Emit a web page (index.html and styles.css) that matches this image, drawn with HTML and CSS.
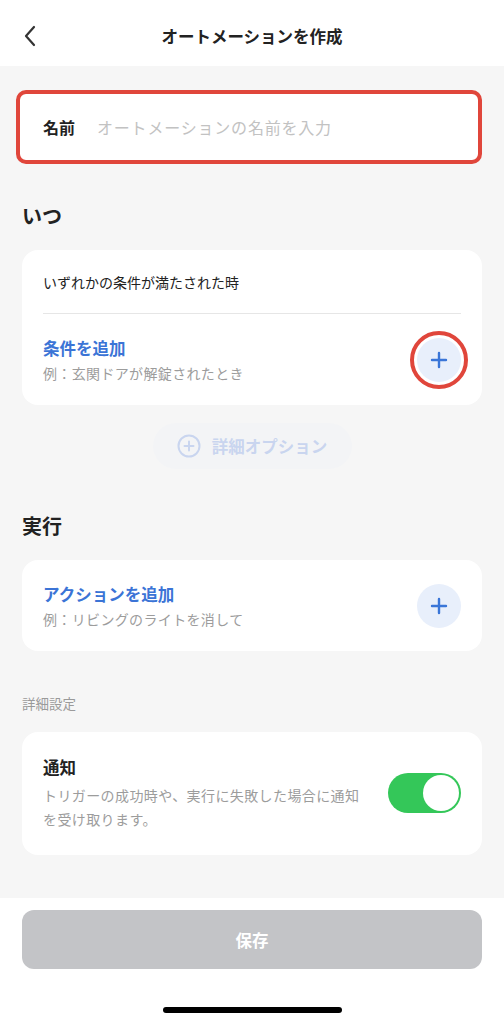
FILE: index.html
```html
<!DOCTYPE html>
<html lang="ja">
<head>
<meta charset="utf-8">
<title>オートメーションを作成</title>
<link rel="stylesheet" href="styles.css">
</head>
<body>
<div class="screen">
  <header class="topbar">
    <span class="back">
      <svg width="14" height="22" viewBox="0 0 14 22"><path d="M11 2 L3 11 L11 20" fill="none" stroke="#333" stroke-width="2.2" stroke-linecap="round" stroke-linejoin="round"/></svg>
    </span>
    <h1 class="title">オートメーションを作成</h1>
  </header>

  <main class="content">
    <div class="name-field">
      <span class="name-label">名前</span>
      <span class="name-placeholder">オートメーションの名前を入力</span>
    </div>

    <h2 class="section-title">いつ</h2>
    <section class="card">
      <div class="card-top">いずれかの条件が満たされた時</div>
      <div class="divider"></div>
      <div class="add-row">
        <div class="add-text">
          <div class="add-title">条件を追加</div>
          <div class="add-sub">例：玄関ドアが解錠されたとき</div>
        </div>
        <span class="plus-btn highlighted">
          <svg width="18" height="18" viewBox="0 0 18 18"><path d="M9 2 V16 M2 9 H16" stroke="#3a76d8" stroke-width="2.4" stroke-linecap="round"/></svg>
        </span>
      </div>
    </section>

    <div class="options-wrap">
      <span class="options-btn">
        <svg width="24" height="24" viewBox="0 0 24 24"><circle cx="12" cy="12" r="10.5" fill="none" stroke="#c9d5ef" stroke-width="2"/><path d="M12 7.5 V16.5 M7.5 12 H16.5" stroke="#c9d5ef" stroke-width="2" stroke-linecap="round"/></svg>
        <span>詳細オプション</span>
      </span>
    </div>

    <h2 class="section-title exec">実行</h2>
    <section class="card">
      <div class="add-row">
        <div class="add-text">
          <div class="add-title">アクションを追加</div>
          <div class="add-sub">例：リビングのライトを消して</div>
        </div>
        <span class="plus-btn">
          <svg width="18" height="18" viewBox="0 0 18 18"><path d="M9 2 V16 M2 9 H16" stroke="#3a76d8" stroke-width="2.4" stroke-linecap="round"/></svg>
        </span>
      </div>
    </section>

    <div class="small-label">詳細設定</div>
    <section class="card notify">
      <div class="notify-text">
        <div class="notify-title">通知</div>
        <div class="notify-desc">トリガーの成功時や、実行に失敗した場合に通知を受け取ります。</div>
      </div>
      <span class="toggle"><span class="knob"></span></span>
    </section>
  </main>

  <footer class="footer">
    <button class="save">保存</button>
    <div class="home-indicator"></div>
  </footer>
</div>
</body>
</html>
```

FILE: styles.css
```css
* { box-sizing: border-box; }
html, body { margin: 0; padding: 0; }
body {
  font-family: "Noto Sans CJK JP", "Noto Sans", sans-serif;
  color: #222;
  background: #fff;
}
.screen {
  width: 504px;
  height: 1024px;
  display: flex;
  flex-direction: column;
  overflow: hidden;
}
.topbar {
  height: 66px;
  flex: none;
  display: flex;
  align-items: center;
  justify-content: center;
  position: relative;
  background: #fff;
}
.back {
  position: absolute;
  left: 23px;
  top: 25px;
  display: flex;
}
.title {
  margin: 0;
  font-size: 16.5px;
  font-weight: 700;
  color: #222;
  line-height: 24px;
  margin-top: 6px;
}
.content {
  flex: 1;
  background: #f6f6f6;
  padding: 24px 22px 0 22px;
}
.name-field {
  margin-left: -6px;
  height: 74px;
  border: 4px solid #e0463b;
  border-radius: 10px;
  background: #fff;
  display: flex;
  align-items: center;
  padding-left: 23px;
  gap: 22px;
}
.name-label {
  font-size: 16px;
  font-weight: 700;
  color: #222;
}
.name-placeholder {
  font-size: 16px;
  letter-spacing: 0.8px;
  color: #c2c2c2;
}
.section-title {
  margin: 38px 0 20px 0;
  font-size: 20px;
  line-height: 28px;
  font-weight: 700;
  color: #222;
}
.section-title.exec { margin-top: 43px; }
.card {
  background: #fff;
  border-radius: 16px;
}
.card-top {
  height: 63px;
  display: flex;
  align-items: center;
  padding: 0 21px;
  font-size: 14px;
  color: #222;
}
.divider {
  height: 1px;
  background: #e6e6e6;
  margin: 0 21px;
}
.add-row {
  height: 91px;
  display: flex;
  align-items: center;
  justify-content: space-between;
  padding: 0 21px;
}
.add-title {
  font-size: 16.5px;
  line-height: 24px;
  font-weight: 700;
  color: #3b74d6;
}
.add-sub {
  margin-top: 2px;
  font-size: 14px;
  line-height: 22px;
  letter-spacing: 0.35px;
  color: #9c9c9c;
}
.plus-btn {
  width: 44px;
  height: 44px;
  border-radius: 50%;
  background: #e8effb;
  display: flex;
  align-items: center;
  justify-content: center;
  position: relative;
}
.plus-btn.highlighted::after {
  content: "";
  position: absolute;
  inset: -7px;
  border: 4px solid #e0463b;
  border-radius: 50%;
}
.options-wrap {
  display: flex;
  justify-content: center;
  margin-top: 18px;
}
.options-btn {
  height: 46px;
  width: 199px;
  border-radius: 23px;
  background: #f3f4f6;
  display: flex;
  align-items: center;
  justify-content: center;
  gap: 11px;
  font-size: 16.5px;
  font-weight: 700;
  color: #c9d5ef;
}
.small-label {
  margin: 42px 0 19px 0;
  font-size: 13.5px;
  line-height: 20px;
  color: #9a9a9a;
}
.card.notify {
  display: flex;
  align-items: center;
  justify-content: space-between;
  padding: 23px 21px 24px 21px;
}
.notify-title {
  font-size: 16.5px;
  line-height: 24px;
  font-weight: 700;
  color: #222;
}
.notify-desc {
  margin-top: 4px;
  width: 325px;
  font-size: 14px;
  line-height: 24px;
  letter-spacing: 0.4px;
  color: #9c9c9c;
}
.toggle {
  width: 73px;
  height: 40px;
  border-radius: 20px;
  background: #34c759;
  display: flex;
  align-items: center;
  justify-content: flex-end;
  padding-right: 2px;
}
.knob {
  width: 36px;
  height: 36px;
  border-radius: 50%;
  background: #fff;
}
.footer {
  height: 126px;
  flex: none;
  background: #fff;
  padding: 12px 22px 0 22px;
  display: flex;
  flex-direction: column;
  align-items: center;
}
.save {
  width: 460px;
  height: 59px;
  border: none;
  border-radius: 12px;
  background: #c3c4c7;
  color: #fff;
  font-family: "Noto Sans CJK JP", "Noto Sans", sans-serif;
  font-size: 16.5px;
  font-weight: 700;
}
.home-indicator {
  margin-top: 38px;
  width: 179px;
  height: 6px;
  border-radius: 3px;
  background: #000;
}
```
